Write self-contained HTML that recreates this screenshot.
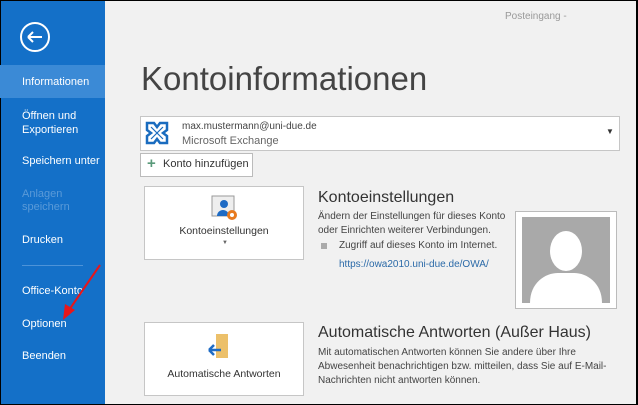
<!DOCTYPE html>
<html><head><meta charset="utf-8"><style>
*{margin:0;padding:0;box-sizing:border-box}
body{width:638px;height:405px;overflow:hidden;font-family:"Liberation Sans",sans-serif;background:#000;position:relative}
.main{position:absolute;left:1px;top:1px;width:635px;height:403px;background:#f1f1f1}
.side{position:absolute;left:1px;top:1px;width:104px;height:403px;background:#1470c8}
.a{position:absolute;white-space:nowrap}
.s{color:#fff;font-size:11px;left:22px}
.box{position:absolute;background:#fff;border:1px solid #c6c6c6}
.t{color:#444;font-size:10px;line-height:14px}
</style></head><body>
<div class="main"></div>
<div class="side"></div>
<div class="a" style="left:0;top:65px;width:105px;height:33px;background:#3b8ad6"></div>
<svg class="a" style="left:19px;top:22px" width="32" height="32"><circle cx="16" cy="15" r="14" fill="none" stroke="#fff" stroke-width="2"/><path d="M9 15h14M9 15l5-5M9 15l5 5" stroke="#fff" stroke-width="2" fill="none"/></svg>
<div class="a s" style="top:76px">Informationen</div>
<div class="a s" style="top:109px;line-height:14px">Öffnen und<br>Exportieren</div>
<div class="a s" style="top:155px">Speichern unter</div>
<div class="a s" style="top:188px;line-height:13px;color:#5a9ad8">Anlagen<br>speichern</div>
<div class="a s" style="top:234px">Drucken</div>
<div class="a" style="left:22px;top:265px;width:61px;height:1px;background:#4d93d8"></div>
<div class="a s" style="top:285px">Office-Konto</div>
<div class="a s" style="top:318px">Optionen</div>
<div class="a s" style="top:350px">Beenden</div>
<svg class="a" style="left:55px;top:260px" width="50" height="65"><path d="M45 5L12 53" stroke="#e8161a" stroke-width="2"/><path d="M8 60L10 44L20 50Z" fill="#e8161a"/></svg>
<div class="a" style="left:505px;top:11px;font-size:10px;color:#999">Posteingang -</div>
<div class="a" style="left:141px;top:60px;font-size:33px;color:#444">Kontoinformationen</div>
<div class="box" style="left:140px;top:116px;width:480px;height:35px"></div>
<svg class="a" style="left:144px;top:120px" width="26" height="26"><path d="M3 3h7l3 4 3-4h7v7l-4 3 4 3v7h-7l-3-4-3 4H3v-7l4-3-4-3z" fill="none" stroke="#1a6cbf" stroke-width="2.5"/><path d="M7 7l12 12M19 7L7 19" stroke="#1a6cbf" stroke-width="1.2"/></svg>
<div class="a t" style="left:182px;top:120px;color:#444">max.mustermann@uni-due.de</div>
<div class="a t" style="left:182px;top:134px;color:#666;font-size:11px">Microsoft Exchange</div>
<div class="a" style="left:606px;top:127px;font-size:8px;color:#333">▼</div>
<div class="box" style="left:140px;top:153px;width:113px;height:24px;border-color:#bbb"></div>
<div class="a" style="left:147px;top:155px;font-size:15px;font-weight:bold;color:#5a9a7a">+</div>
<div class="a" style="left:163px;top:158px;font-size:11px;color:#333">Konto hinzufügen</div>
<div class="box" style="left:144px;top:186px;width:160px;height:74px"></div>
<svg class="a" style="left:210px;top:194px" width="30" height="30"><rect x="2" y="2" width="22" height="20" fill="#eee" stroke="#999"/><circle cx="14" cy="10" r="4" fill="#1e6bc4"/><path d="M7 22a6 6 0 0 1 12 0z" fill="#1e6bc4"/><circle cx="22" cy="21" r="5" fill="#e87a1e"/><circle cx="22" cy="21" r="2" fill="#fff"/></svg>
<div class="a" style="left:144px;top:225px;width:160px;text-align:center;font-size:10.5px;color:#333">Kontoeinstellungen</div>
<div class="a" style="left:222px;top:240px;font-size:6px;color:#666">▼</div>
<div class="a" style="left:318px;top:189px;font-size:16px;color:#333">Kontoeinstellungen</div>
<div class="a t" style="left:318px;top:210px">Ändern der Einstellungen für dieses Konto<br>oder Einrichten weiterer Verbindungen.</div>
<div class="a" style="left:321px;top:243px;width:6px;height:6px;background:#aaa"></div>
<div class="a t" style="left:339px;top:239px">Zugriff auf dieses Konto im Internet.</div>
<div class="a t" style="left:339px;top:258px;color:#2b6aa8">https://owa2010.uni-due.de/OWA/</div>
<div class="box" style="left:515px;top:211px;width:102px;height:98px;border-color:#bbb"></div>
<svg class="a" style="left:522px;top:217px" width="88" height="86"><rect width="88" height="86" fill="#a9a9a9"/><ellipse cx="44" cy="34" rx="16" ry="20" fill="#fff"/><path d="M8 86c0-20 15-30 28-30h16c13 0 28 10 28 30z" fill="#fff"/></svg>
<div class="box" style="left:144px;top:322px;width:160px;height:74px"></div>
<svg class="a" style="left:205px;top:333px" width="30" height="28"><rect x="11" y="1" width="12" height="24" fill="#ecc06a"/><path d="M4 17h12M4 17l5-5M4 17l5 5" stroke="#1e6bc4" stroke-width="2.5" fill="none"/></svg>
<div class="a" style="left:144px;top:368px;width:160px;text-align:center;font-size:10.5px;color:#333">Automatische Antworten</div>
<div class="a" style="left:318px;top:324px;font-size:16px;color:#333">Automatische Antworten (Außer Haus)</div>
<div class="a t" style="left:318px;top:346px">Mit automatischen Antworten können Sie andere über Ihre<br>Abwesenheit benachrichtigen bzw. mitteilen, dass Sie auf E-Mail-<br>Nachrichten nicht antworten können.</div>
</body></html>
